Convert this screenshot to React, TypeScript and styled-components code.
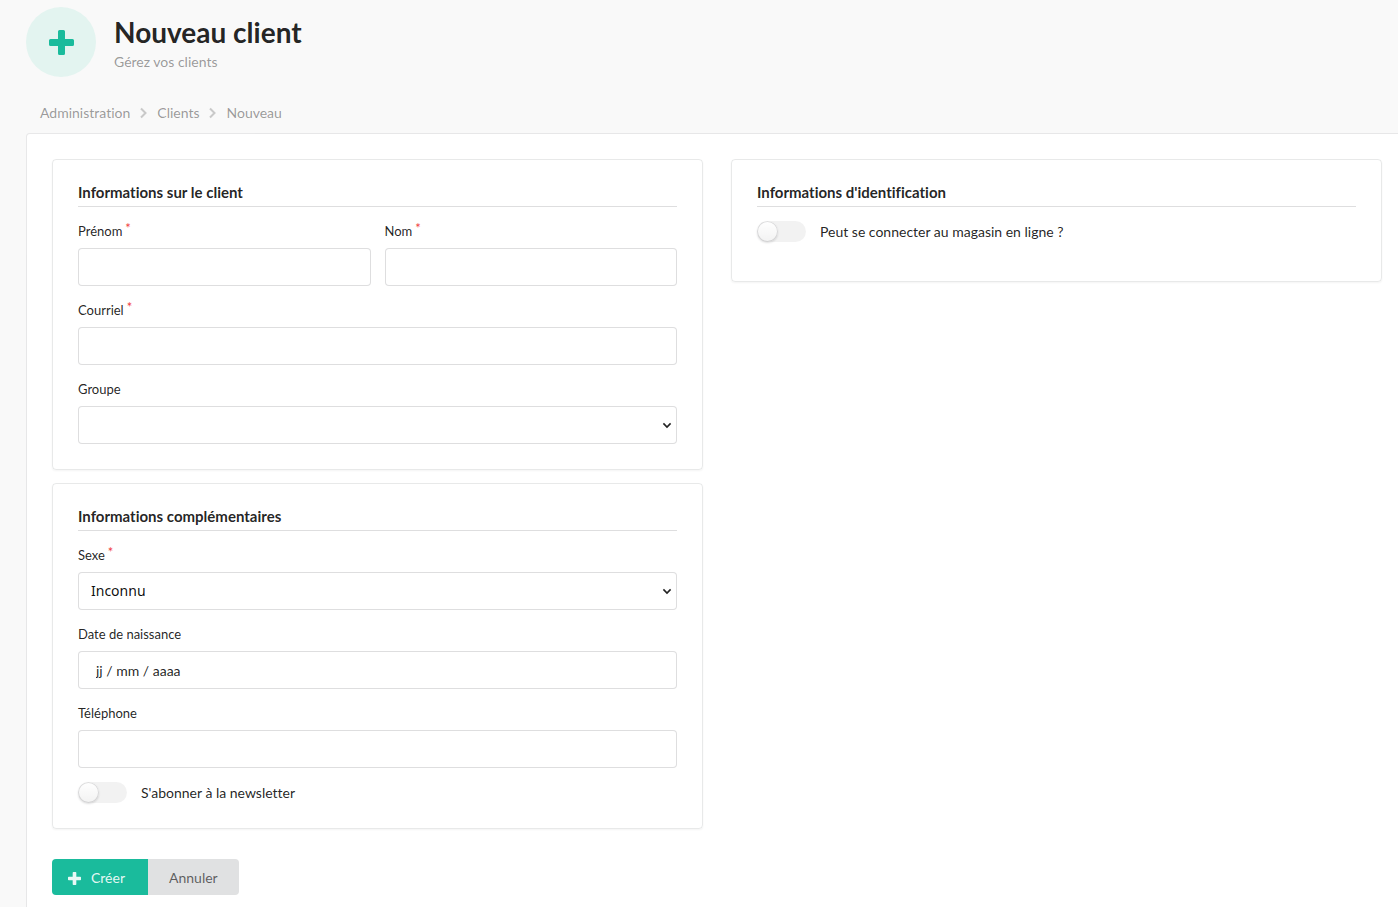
import React from 'react';
import styled, { createGlobalStyle } from 'styled-components';

const GlobalStyle = createGlobalStyle`
  *, *::before, *::after { box-sizing: border-box; }
  body {
    margin: 0;
    background: #f9f9f9;
    color: rgba(0, 0, 0, 0.87);
    font-family: Lato, "Liberation Sans", sans-serif;
    font-size: 14px;
    font-variant-ligatures: none;
    line-height: 20px;
  }
`;

const Page = styled.div`
  display: flex;
  flex-direction: column;
  min-height: 100vh;
  padding: 7px 0 0 26px;
`;

const Header = styled.header`
  display: flex;
  gap: 18px;
`;

const HeaderIcon = styled.div`
  display: flex;
  align-items: center;
  justify-content: center;
  width: 70px;
  height: 70px;
  border-radius: 50%;
  background: #e3f4f0;
  color: #1abb9c;
`;

const HeaderText = styled.div`
  padding-top: 7px;
`;

const Title = styled.h1`
  margin: 0;
  font-size: 28px;
  font-weight: 700;
  line-height: 36px;
`;

const Subtitle = styled.p`
  margin: 0;
  color: rgba(0, 0, 0, 0.4);
  line-height: 24px;
`;

const Breadcrumb = styled.nav`
  display: flex;
  align-items: center;
  gap: 9px;
  margin: 26px 0 10px;
  padding-left: 14px;
  color: rgba(0, 0, 0, 0.4);
`;

const Crumb = styled.a`
  color: inherit;
  text-decoration: none;
`;

const Panel = styled.main`
  flex: 1;
  padding: 25px 16px 12px 25px;
  background: #fff;
  border: solid rgba(34, 36, 38, 0.1);
  border-width: 1px 0 0 1px;
  border-top-left-radius: 4px;
`;

const Columns = styled.div`
  display: grid;
  grid-template-columns: 1fr 1fr;
  align-items: start;
  gap: 28px;
`;

const Column = styled.div`
  display: grid;
  gap: 13px;
`;

const Card = styled.section`
  display: grid;
  gap: 14px;
  padding: 25px;
  border: 1px solid rgba(34, 36, 38, 0.1);
  border-radius: 4px;
  box-shadow: 0 1px 2px rgba(34, 36, 38, 0.05);
`;

const CardTitle = styled.h2`
  margin: 0;
  padding-bottom: 6px;
  border-bottom: 1px solid rgba(34, 36, 38, 0.15);
  font-size: 15px;
  font-weight: 700;
  line-height: 15px;
`;

const FieldRow = styled.div`
  display: grid;
  grid-template-columns: 1fr 1fr;
  gap: 14px;
`;

const FieldBox = styled.div`
  display: grid;
  gap: 6px;
`;

const Label = styled.label`
  font-size: 13px;
  line-height: 21px;
`;

const Required = styled.span`
  margin-left: 3px;
  color: #f03e3e;
  vertical-align: top;
  line-height: 14px;
`;

const Input = styled.input<{ $inset?: boolean }>`
  width: 100%;
  height: 38px;
  padding: 0 ${(p) => (p.$inset ? 17 : 13)}px;
  background: #fff;
  border: 1px solid rgba(34, 36, 38, 0.15);
  border-radius: 4px;
  color: inherit;
  font: inherit;
  &::placeholder { color: rgba(0, 0, 0, 0.87); opacity: 1; }
`;

const SelectBox = styled.div`
  position: relative;
`;

const Select = styled.select`
  display: block;
  appearance: none;
  width: 100%;
  height: 38px;
  padding: 0 28px 2px 12px;
  background: #fff;
  border: 1px solid rgba(34, 36, 38, 0.15);
  border-radius: 4px;
  color: rgba(0, 0, 0, 0.95);
  font: 14px "Noto Sans", "Open Sans", sans-serif;
`;

const SelectArrow = styled.svg`
  position: absolute;
  top: 16px;
  right: 5px;
  pointer-events: none;
`;

const ToggleRow = styled.label<{ $spaced?: boolean }>`
  display: flex;
  align-items: center;
  gap: 14px;
  height: 21px;
  margin-bottom: ${(p) => (p.$spaced ? 14 : 0)}px;
  line-height: 21px;
`;

const Toggle = styled.input`
  appearance: none;
  width: 49px;
  height: 21px;
  margin: 0;
  border-radius: 11px;
  background: rgba(0, 0, 0, 0.05);
  &::before {
    content: "";
    display: block;
    width: 21px;
    height: 21px;
    border-radius: 50%;
    background: #fff linear-gradient(transparent, rgba(0, 0, 0, 0.05));
    box-shadow: 0 1px 2px rgba(34, 36, 38, 0.15), inset 0 0 0 1px rgba(34, 36, 38, 0.15);
  }
  &:checked { background: #1abb9c; }
  &:checked::before { margin-left: 28px; }
`;

const Actions = styled.div`
  display: flex;
  margin-top: 30px;
`;

const SubmitButton = styled.button`
  display: flex;
  align-items: center;
  gap: 10px;
  height: 36px;
  padding: 2px 23px 0 16px;
  border: 0;
  border-radius: 4px 0 0 4px;
  background: #1abb9c;
  color: rgba(255, 255, 255, 0.9);
  font: inherit;
`;

const CancelLink = styled.a`
  height: 36px;
  padding: 0 21px;
  border-radius: 0 4px 4px 0;
  background: #e0e1e2;
  color: rgba(0, 0, 0, 0.6);
  line-height: 38px;
  text-decoration: none;
`;

const PlusIcon = ({ size }: { size: number }) => (
  <svg width={size} height={size} viewBox="0 0 25 25" fill="currentColor" aria-hidden="true">
    <path d="M10.500 0h4Q16 0 16 1.500V9h7.500Q25 9 25 10.500v4Q25 16 23.500 16H16v7.500Q16 25 14.500 25h-4Q9 25 9 23.500V16H1.500Q0 16 0 14.500v-4Q0 9 1.500 9H9V1.500Q9 0 10.500 0z" />
  </svg>
);

const Divider = () => (
  <svg width="9" height="12" viewBox="0 0 9 12" fill="none" stroke="#c9c9c9" strokeWidth="2" aria-hidden="true">
    <path d="M2 1.500L6.500 6L2 10.500" />
  </svg>
);

interface FieldProps {
  id: string;
  label: string;
  required?: boolean;
  children: React.ReactNode;
}

const Field = ({ id, label, required, children }: FieldProps) => (
  <FieldBox>
    <Label htmlFor={id}>
      {label}
      {required && <Required>*</Required>}
    </Label>
    {children}
  </FieldBox>
);

const Dropdown = ({ id, options }: { id: string; options: string[] }) => (
  <SelectBox>
    <Select id={id}>
      {options.map((o) => (
        <option key={o}>{o}</option>
      ))}
    </Select>
    <SelectArrow width="10" height="7" viewBox="0 0 10 7" fill="none" stroke="#222" strokeWidth="1.600" aria-hidden="true">
      <path d="M1.400 1.400L5 5L8.600 1.400" />
    </SelectArrow>
  </SelectBox>
);

export default function App() {
  return (
    <>
      <GlobalStyle />
      <Page>
        <Header>
          <HeaderIcon>
            <PlusIcon size={25} />
          </HeaderIcon>
          <HeaderText>
            <Title>Nouveau client</Title>
            <Subtitle>Gérez vos clients</Subtitle>
          </HeaderText>
        </Header>
        <Breadcrumb aria-label="Fil d'Ariane">
          <Crumb href="#administration">Administration</Crumb>
          <Divider />
          <Crumb href="#clients">Clients</Crumb>
          <Divider />
          <span>Nouveau</span>
        </Breadcrumb>
        <Panel>
          <form>
            <Columns>
              <Column>
                <Card>
                  <CardTitle>Informations sur le client</CardTitle>
                  <FieldRow>
                    <Field id="prenom" label="Prénom" required>
                      <Input id="prenom" type="text" />
                    </Field>
                    <Field id="nom" label="Nom" required>
                      <Input id="nom" type="text" />
                    </Field>
                  </FieldRow>
                  <Field id="courriel" label="Courriel" required>
                    <Input id="courriel" type="email" />
                  </Field>
                  <Field id="groupe" label="Groupe">
                    <Dropdown id="groupe" options={['']} />
                  </Field>
                </Card>
                <Card>
                  <CardTitle>Informations complémentaires</CardTitle>
                  <Field id="sexe" label="Sexe" required>
                    <Dropdown id="sexe" options={['Inconnu']} />
                  </Field>
                  <Field id="naissance" label="Date de naissance">
                    <Input id="naissance" type="text" placeholder="jj / mm / aaaa" $inset />
                  </Field>
                  <Field id="telephone" label="Téléphone">
                    <Input id="telephone" type="tel" />
                  </Field>
                  <ToggleRow>
                    <Toggle type="checkbox" />
                    S'abonner à la newsletter
                  </ToggleRow>
                </Card>
              </Column>
              <Card>
                <CardTitle>Informations d'identification</CardTitle>
                <ToggleRow $spaced>
                  <Toggle type="checkbox" />
                  Peut se connecter au magasin en ligne ?
                </ToggleRow>
              </Card>
            </Columns>
            <Actions>
              <SubmitButton type="submit">
                <PlusIcon size={13} />
                Créer
              </SubmitButton>
              <CancelLink href="#clients">Annuler</CancelLink>
            </Actions>
          </form>
        </Panel>
      </Page>
    </>
  );
}
